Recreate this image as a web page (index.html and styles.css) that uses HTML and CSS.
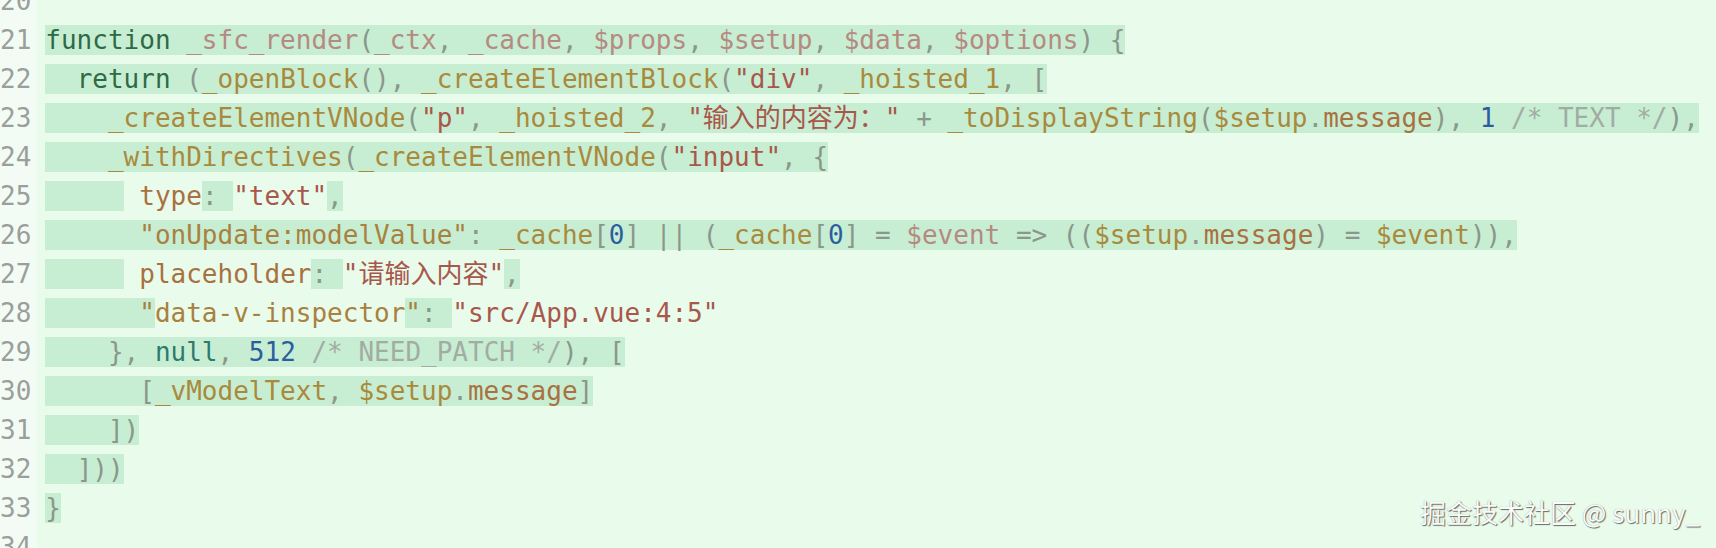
FILE: index.html
```html
<!DOCTYPE html>
<html lang="en">
<head>
<meta charset="utf-8">
<title>sfc render</title>
<link rel="stylesheet" href="styles.css">
</head>
<body>
<div class="editor">
  <div class="gutter">
    <div class="ln">20</div>
    <div class="ln">21</div>
    <div class="ln">22</div>
    <div class="ln">23</div>
    <div class="ln">24</div>
    <div class="ln">25</div>
    <div class="ln">26</div>
    <div class="ln">27</div>
    <div class="ln">28</div>
    <div class="ln">29</div>
    <div class="ln">30</div>
    <div class="ln">31</div>
    <div class="ln">32</div>
    <div class="ln">33</div>
    <div class="ln">34</div>
  </div>
  <div class="code">
<div class="line"></div>
<div class="line"><span class="h"><span class="k">function</span> <span class="p">_sfc_render</span><span class="o">(</span><span class="p">_ctx</span><span class="o">,</span> <span class="p">_cache</span><span class="o">,</span> <span class="p">$props</span><span class="o">,</span> <span class="p">$setup</span><span class="o">,</span> <span class="p">$data</span><span class="o">,</span> <span class="p">$options</span><span class="o">)</span> <span class="o">{</span></span></div>
<div class="line"><span class="h">  <span class="k">return</span> <span class="o">(</span><span class="f">_openBlock</span><span class="o">(),</span> <span class="f">_createElementBlock</span><span class="o">(</span><span class="s">"div"</span><span class="o">,</span> <span class="f">_hoisted_1</span><span class="o">,</span> <span class="o">[</span></span></div>
<div class="line"><span class="h">    <span class="f">_createElementVNode</span><span class="o">(</span><span class="s">"p"</span><span class="o">,</span> <span class="f">_hoisted_2</span><span class="o">,</span> <span class="s">"输入的内容为："</span> <span class="o">+</span> <span class="f">_toDisplayString</span><span class="o">(</span><span class="v">$setup</span><span class="o">.</span><span class="pr">message</span><span class="o">),</span> <span class="n">1</span> <span class="c">/* TEXT */</span><span class="o">),</span></span></div>
<div class="line"><span class="h">    <span class="f">_withDirectives</span><span class="o">(</span><span class="f">_createElementVNode</span><span class="o">(</span><span class="s">"input"</span><span class="o">,</span> <span class="o">{</span></span></div>
<div class="line"><span class="h">     </span> <span class="pr">type</span><span class="h"><span class="o">:</span> </span><span class="s">"text"</span><span class="h"><span class="o">,</span></span></div>
<div class="line"><span class="h">      <span class="sk">"onUpdate:modelValue"</span><span class="o">:</span> <span class="f">_cache</span><span class="o">[</span><span class="n">0</span><span class="o">]</span> <span class="o">||</span> <span class="o">(</span><span class="f">_cache</span><span class="o">[</span><span class="n">0</span><span class="o">]</span> <span class="o">=</span> <span class="p">$event</span> <span class="o">=&gt;</span> <span class="o">((</span><span class="v">$setup</span><span class="o">.</span><span class="pr">message</span><span class="o">)</span> <span class="o">=</span> <span class="v">$event</span><span class="o">)),</span></span></div>
<div class="line"><span class="h">     </span> <span class="pr">placeholder</span><span class="h"><span class="o">:</span> </span><span class="s">"请输入内容"</span><span class="h"><span class="o">,</span></span></div>
<div class="line"><span class="h">      <span class="sk">"</span></span><span class="sk">data-v-inspector</span><span class="h"><span class="sk">"</span><span class="o">:</span> </span><span class="s">"src/App.vue:4:5"</span></div>
<div class="line"><span class="h">    <span class="o">},</span> <span class="nl">null</span><span class="o">,</span> <span class="n">512</span> <span class="c">/* NEED_PATCH */</span><span class="o">),</span> <span class="o">[</span></span></div>
<div class="line"><span class="h">      <span class="o">[</span><span class="f">_vModelText</span><span class="o">,</span> <span class="v">$setup</span><span class="o">.</span><span class="pr">message</span><span class="o">]</span></span></div>
<div class="line"><span class="h">    <span class="o">])</span></span></div>
<div class="line"><span class="h">  <span class="o">]))</span></span></div>
<div class="line"><span class="h"><span class="o">}</span></span></div>
<div class="line"></div>
  </div>
</div>
<div class="wm">掘金技术社区 @ sunny_</div>
</body>
</html>
```
FILE: styles.css
```css
html, body {
  margin: 0;
  padding: 0;
}
body {
  position: relative;
  width: 1716px;
  height: 548px;
  overflow: hidden;
  background: #e9fbeb;
}
.editor {
  display: flex;
  margin-top: -18px;
  font-family: "DejaVu Sans Mono", "Noto Sans CJK SC", monospace;
  font-size: 26px;
  line-height: 39px;
}
.gutter {
  flex: 0 0 36px;
  box-sizing: border-box;
  padding-right: 6px;
  text-align: right;
  color: #9c9e9c;
  background: #f3fcf4;
}
.ln {
  height: 39px;
  white-space: nowrap;
}
.code {
  flex: 1;
  padding-left: 8px;
}
.line {
  height: 39px;
  white-space: pre;
}
.h { background: #c7eed2; }
.k { color: #2d6a47; }
.nl { color: #2f7a6f; }
.n { color: #2c5d9e; }
.f { color: #a98a3d; }
.v { color: #a98a3d; }
.p { color: #b58a82; }
.s { color: #a8574b; }
.pr { color: #a8713f; }
.sk { color: #a9813f; }
.c { color: #a2aca3; }
.o { color: #8a978b; }
.wm {
  position: absolute;
  right: 16px;
  top: 497px;
  font-family: "Noto Sans CJK SC", sans-serif;
  font-size: 26px;
  line-height: 30px;
  color: #fafafa;
  text-shadow: 1px 1px 1px rgba(0, 0, 0, 0.55), 0 0 1px rgba(0, 0, 0, 0.35);
  white-space: nowrap;
}
```
